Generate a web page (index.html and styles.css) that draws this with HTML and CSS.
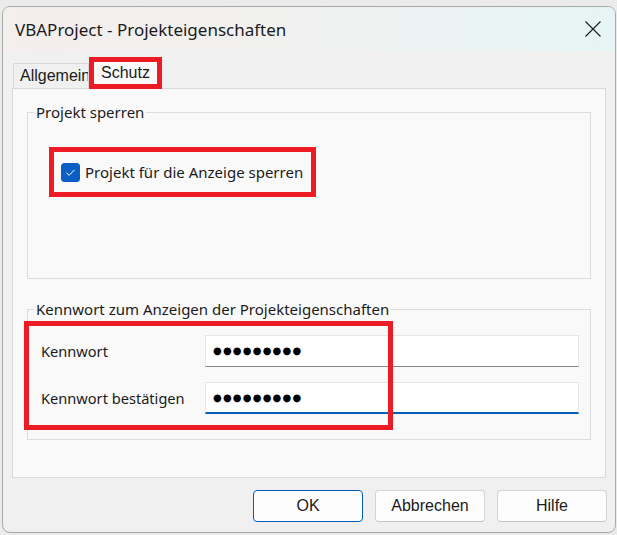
FILE: index.html
```html
<!DOCTYPE html>
<html lang="de">
<head>
	<meta charset="utf-8">
	<title>VBAProject - Projekteigenschaften</title>
	<link rel="stylesheet" href="styles.css">
</head>
<body>
	<div class="window">
		<div class="titlebar">
			<span class="title">VBAProject - Projekteigenschaften</span>
			<span class="close">
				<svg width="16" height="16" viewBox="0 0 16 16">
					<path d="M0.5 0.5 L15.5 15.5 M15.5 0.5 L0.5 15.5" stroke="#1b1b1b" stroke-width="1.1" fill="none"/>
				</svg>
			</span>
		</div>
		<div class="client">
			<div class="tabs">
				<div class="tab">Allgemein</div>
				<div class="tab tab-active">Schutz</div>
			</div>
			<div class="panel">
				<fieldset class="group group-lock">
					<legend>Projekt sperren</legend>
					<label class="check">
						<span class="box">
							<svg width="19" height="19" viewBox="0 0 19 19">
								<rect x="0" y="0" width="19" height="19" rx="3.5" fill="#0b5fc4"/>
								<path d="M5.5 9.8 L8.2 12.3 L13.5 6.8" stroke="#fff" stroke-width="1" fill="none"/>
							</svg>
						</span>
						<span>Projekt für die Anzeige sperren</span>
					</label>
				</fieldset>
				<fieldset class="group group-pass">
					<legend>Kennwort zum Anzeigen der Projekteigenschaften</legend>
					<div class="fields">
						<span class="label">Kennwort</span>
						<div class="input">●●●●●●●●●</div>
						<span class="label">Kennwort bestätigen</span>
						<div class="input input-focus">●●●●●●●●●</div>
						<div class="mark"></div>
					</div>
				</fieldset>
			</div>
			<div class="buttons">
				<button class="btn btn-default">OK</button>
				<button class="btn">Abbrechen</button>
				<button class="btn">Hilfe</button>
			</div>
		</div>
	</div>
</body>
</html>
```
FILE: styles.css
```css
* {
	box-sizing: border-box;
}

html,
body {
	margin: 0;
	padding: 0;
}

body {
	background: #ebebeb;
	font-family: "Noto Sans", "Open Sans", sans-serif;
	color: #1b1b1b;
}

.window {
	width: 614px;
	height: 527px;
	margin: 6px 0 0 2px;
	border: 1px solid #a9a9a9;
	border-radius: 8px;
	background: #f0f0f0;
	overflow: hidden;
	display: flex;
	flex-direction: column;
}

/* Titelleiste */
.titlebar {
	flex: none;
	height: 44px;
	display: flex;
	align-items: center;
	padding: 0 14px 0 12px;
	background: linear-gradient(to right, #f4eeed, #f1f1f0 45%, #e5f5f4);
}

.title {
	flex: 1;
	font-size: 17px;
}

.close {
	width: 16px;
	height: 16px;
	display: flex;
}

.client {
	flex: 1;
	display: flex;
	flex-direction: column;
	padding: 6px 9px 9px 9px;
}

/* Registerkarten */
.tabs {
	display: flex;
	align-items: flex-end;
	height: 31px;
	padding-left: 1px;
	font-family: "Liberation Sans", Arial, sans-serif;
	font-size: 16px;
}

.tab {
	height: 25px;
	line-height: 24px;
	padding: 0 0 0 6px;
	width: 76px;
	border: 1px solid #d9d9d9;
	border-bottom: none;
	white-space: nowrap;
	overflow: hidden;
}

.tab-active {
	position: relative;
	z-index: 1;
	width: auto;
	height: 32px;
	line-height: 22px;
	margin-bottom: -1px;
	padding: 0 7px;
	border: 5px solid #ed1c24;
	background: #f9f9f9;
	overflow: visible;
}

.panel {
	height: 390px;
	padding: 13px 14px 0 14px;
	border: 1px solid #dadada;
	background: #f9f9f9;
}

/* Gruppenrahmen */
.group {
	margin: 0;
	min-width: 0;
	border: 1px solid #dcdcdc;
	font-size: 15px;
}

.group legend {
	padding: 0 2px;
	line-height: 20px;
}

.group-lock {
	padding: 25px 0 81px 21px;
}

.group-lock legend {
	margin-left: -15px;
}

.group-pass {
	margin-top: 20px;
	padding: 16px 11px 25px 13px;
}

.group-pass legend {
	margin-left: -7px;
}

.check {
	display: inline-flex;
	align-items: center;
	gap: 5px;
	height: 50px;
	padding: 0 8px 0 7px;
	border: 5px solid #ed1c24;
}

.box {
	display: flex;
	width: 19px;
	height: 19px;
}

.fields {
	position: relative;
	display: grid;
	grid-template-columns: 164px 1fr;
	row-gap: 15px;
	align-items: center;
}

.label {
	font-size: 14.6px;
}

.input {
	height: 32px;
	padding-left: 7px;
	line-height: 30px;
	background: #fff;
	border: 1px solid #e6e6e6;
	border-bottom-color: #868686;
	font-family: "DejaVu Sans", sans-serif;
	font-size: 10px;
	letter-spacing: 1.2px;
	color: #000;
}

.input-focus {
	border-bottom: 2px solid #005fb8;
}

.mark {
	position: absolute;
	left: -17px;
	top: -14px;
	width: 369px;
	height: 109px;
	border: 5px solid #ed1c24;
}

/* Schaltflächen */
.buttons {
	display: flex;
	justify-content: flex-end;
	gap: 12px;
	margin: 12px -1px 0 0;
}

.btn {
	width: 110px;
	height: 32px;
	padding: 0;
	border: 1px solid #d4d4d4;
	border-bottom-color: #c4c4c4;
	border-radius: 4px;
	background: #fdfdfd;
	font-family: "Liberation Sans", Arial, sans-serif;
	font-size: 16px;
	color: #1b1b1b;
}

.btn-default {
	border: 1px solid #005fb8;
}
```
